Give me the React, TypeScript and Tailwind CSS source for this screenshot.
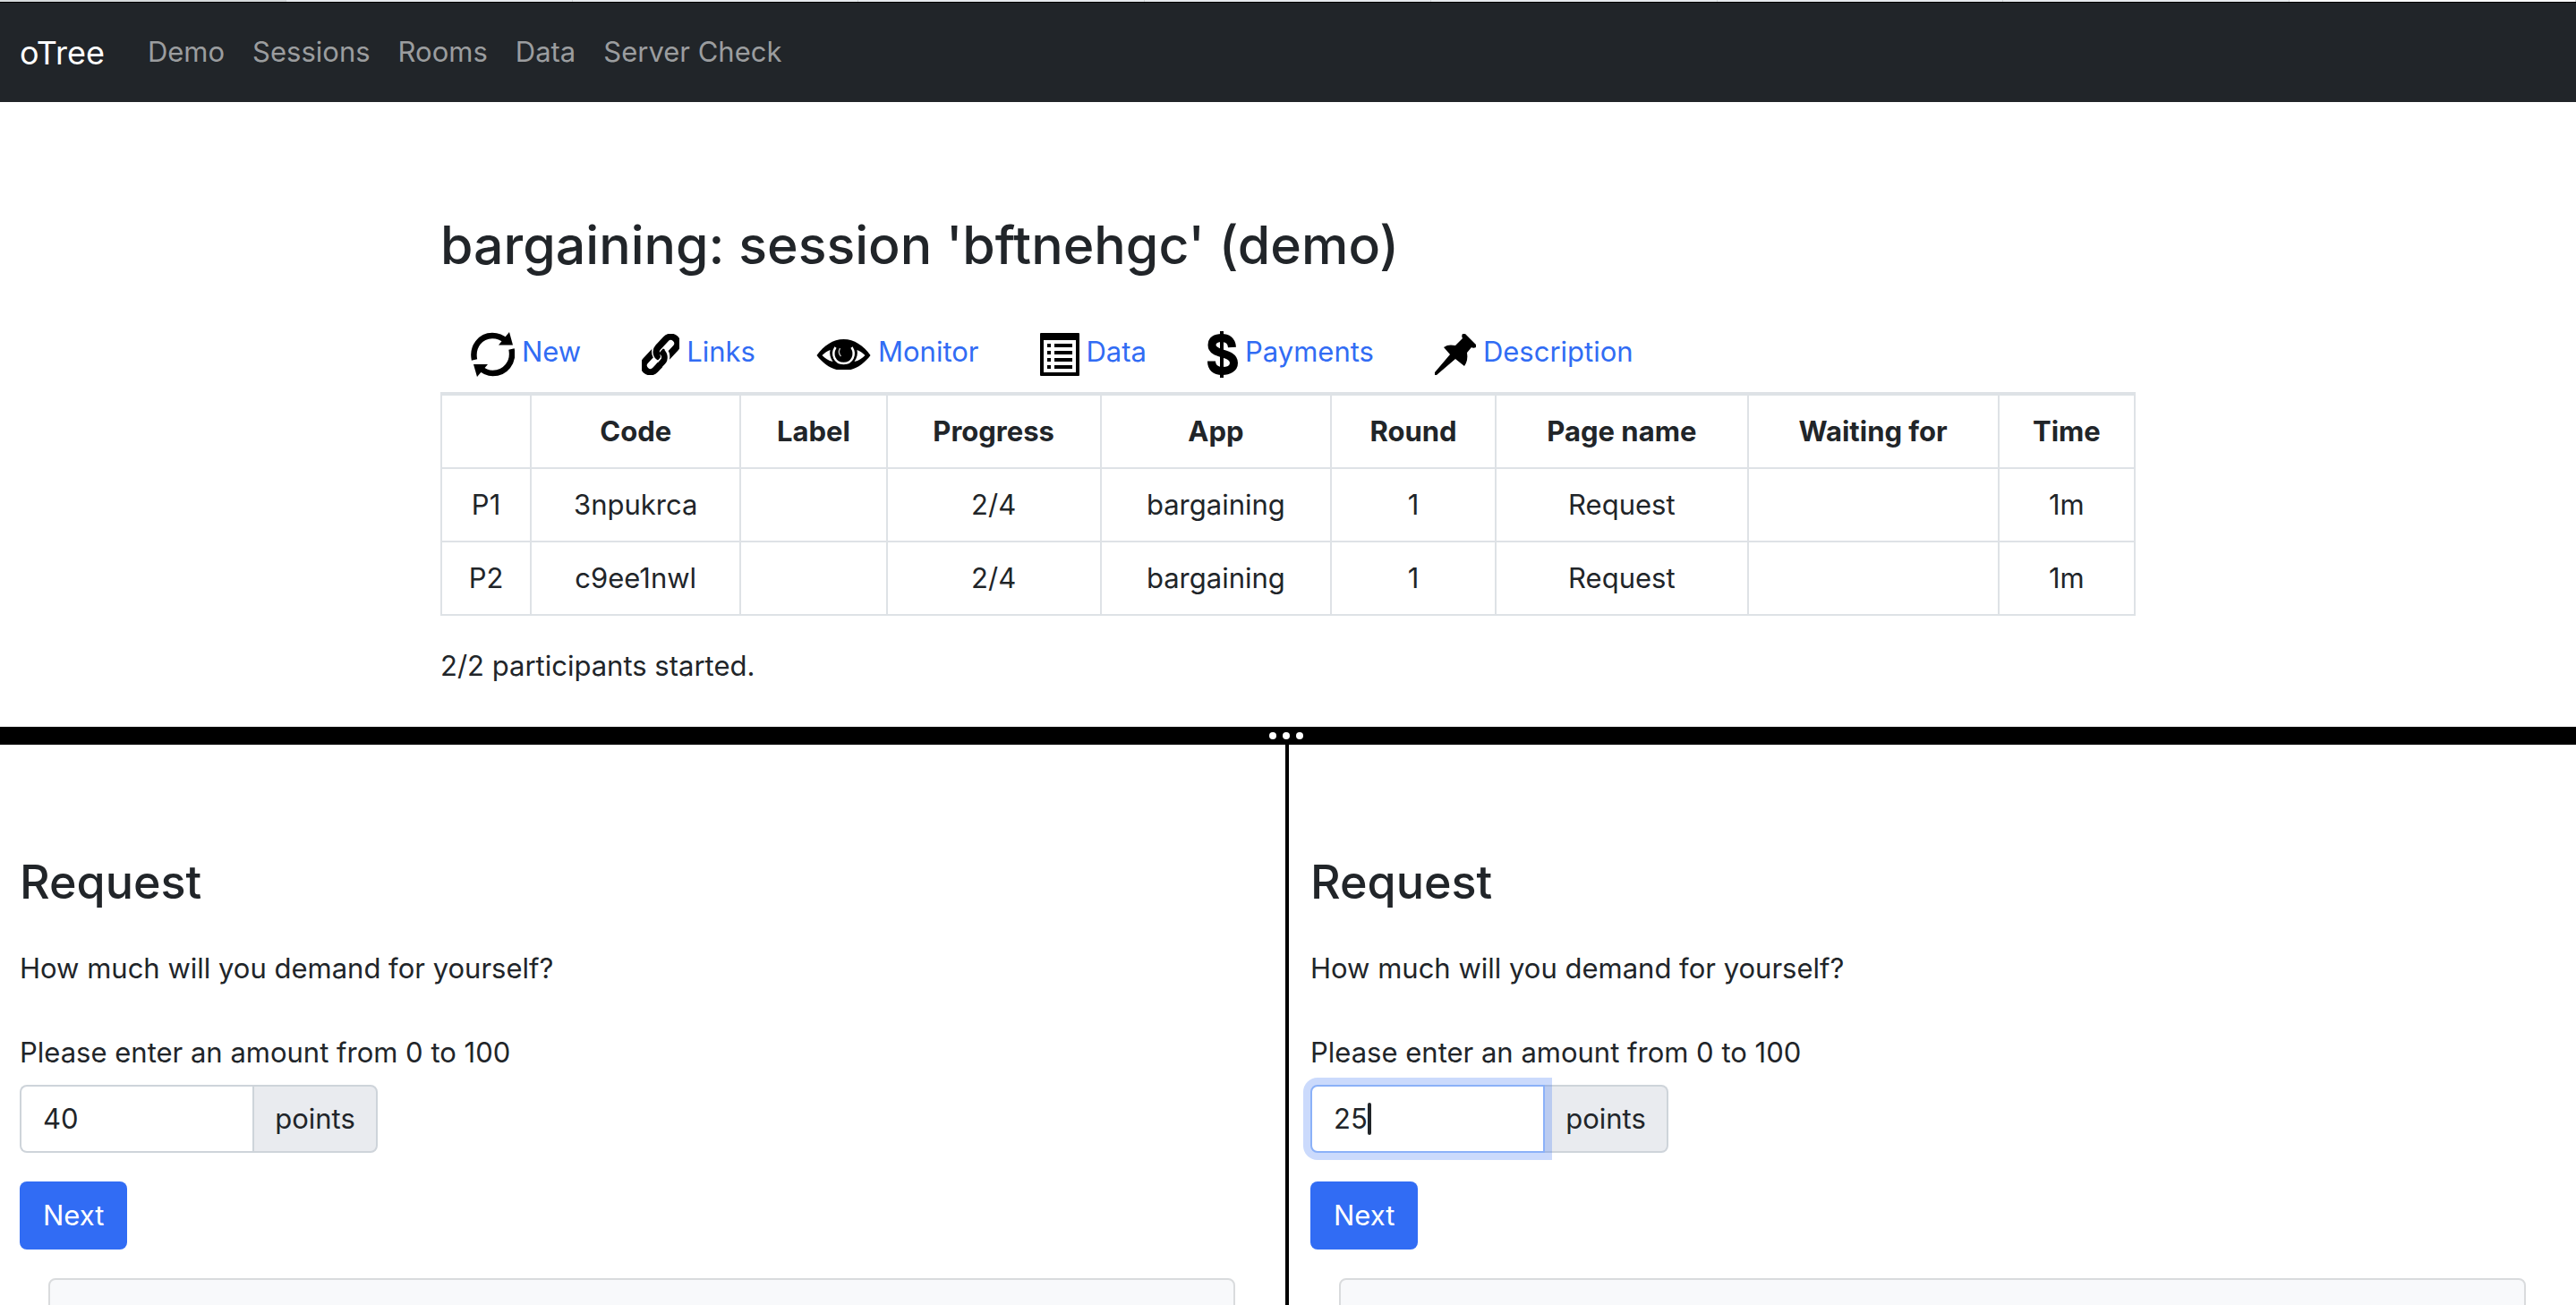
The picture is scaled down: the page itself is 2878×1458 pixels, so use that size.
import React from "react";

const navLinks = ["Demo", "Sessions", "Rooms", "Data", "Server Check"];

const RefreshIcon = () => (
  <svg viewBox="0 0 49 50" className="h-[50px] w-[49px]" fill="none" aria-hidden="true">
    <path d="M4 31C1 16 11 4 24 4c6 0 11 2 15 6" stroke="#000" strokeWidth="6.5" />
    <path d="M43 0l4 14.500H31z" fill="#000" />
    <path d="M45.500 19c3 15-7 27-21 27-6 0-10-2-14-6" stroke="#000" strokeWidth="6.500" />
    <path d="M7 50L3 36h16z" fill="#000" />
  </svg>
);

const LinkIcon = () => (
  <svg viewBox="0 0 42 46" className="h-[46px] w-[42px]" fill="none" aria-hidden="true">
    <g transform="translate(21 23) rotate(43) scale(1.15)">
      <rect x="-6.500" y="-3" width="13" height="24" rx="6.500" stroke="#000" strokeWidth="6.500" />
      <rect x="-6.500" y="-21" width="13" height="24" rx="6.500" stroke="#fff" strokeWidth="9" />
      <rect x="-6.500" y="-21" width="13" height="24" rx="6.500" stroke="#000" strokeWidth="6.500" />
      <path d="M0-3.500c4 0 6.500 3 6.500 7v4" stroke="#fff" strokeWidth="9" />
      <path d="M-2-3c5 0 8.500 3 8.500 7v6" stroke="#000" strokeWidth="6" />
    </g>
  </svg>
);

const EyeIcon = () => (
  <svg viewBox="0 0 60 34" className="h-[34px] w-[61px]" aria-hidden="true">
    <path d="M0 18C8 7 18 0 30 0s22 7 30 18C54 26 46 32 38 34H22C14 32 6 26 0 18z" />
    <path d="M6 18c3-3 6-5 9-6-1 4 0 9 3 13-5-1-9-4-12-7zM54 18c-3-3-6-5-9-6 1 4 0 9-3 13 5-1 9-4 12-7z" fill="#fff" />
    <path d="M21 9c-5 8-1 18 9 18s14-10 9-18" stroke="#fff" strokeWidth="2.500" fill="none" />
    <path d="M26 10c-2 4-1 7 1 9" stroke="#bbb" strokeWidth="1.500" fill="none" />
  </svg>
);

const DataIcon = () => (
  <svg viewBox="0 0 44 48" className="h-[48px] w-[44px]" aria-hidden="true">
    <rect width="44" height="48" rx="1" />
    <path d="M4 8h36v36H4z" fill="#fff" />
    <path d="M8 12h4v4H8zm8 0h20v4H16zM8 20h4v4H8zm8 0h20v4H16zM8 28h4v4H8zm8 0h20v4H16zM8 36h4v4H8zm8 0h20v4H16z" />
  </svg>
);

const DollarIcon = () => (
  <svg viewBox="0 0 34 52" className="h-[52px] w-[34px]" fill="none" stroke="#000" aria-hidden="true">
    <path d="M16 0v52" strokeWidth="4" />
    <path d="M27.500 18C27 10 22 7.500 16 7.500 9 7.500 5 10 5 15.500c0 12 24.500 7 24.500 20 0 6-6 9-13 9-8 0-12-4-12-11" strokeWidth="9" />
  </svg>
);

const PinIcon = () => (
  <svg viewBox="0 0 46 46" className="h-[46px] w-[46px]" aria-hidden="true">
    <path d="M31 0h3l12 12v3c-2 1-4 1-5 0l-5 6c1 6 0 11-3 15l-10-8L2 46H0v-3l17-20-7-8c4-3 8-3 13-2l8-8c-1-2-1-3 0-5z" />
  </svg>
);

const tabs = [
  { label: "New", Icon: RefreshIcon },
  { label: "Links", Icon: LinkIcon },
  { label: "Monitor", Icon: EyeIcon },
  { label: "Data", Icon: DataIcon },
  { label: "Payments", Icon: DollarIcon },
  { label: "Description", Icon: PinIcon },
];

const columns = [
  { name: "", width: "w-[100px]" },
  { name: "Code", width: "w-[234px]" },
  { name: "Label", width: "w-[163px]" },
  { name: "Progress", width: "w-[239px]" },
  { name: "App", width: "w-[257px]" },
  { name: "Round", width: "w-[184px]" },
  { name: "Page name", width: "w-[281px]" },
  { name: "Waiting for", width: "w-[280px]" },
  { name: "Time", width: "w-[152px]" },
];

const rows = [
  ["P1", "3npukrca", "", "2/4", "bargaining", "1", "Request", "", "1m"],
  ["P2", "c9ee1nwl", "", "2/4", "bargaining", "1", "Request", "", "1m"],
];

const browserTabs = [
  "bg-[#d6dadc]",
  "bg-[#e6eaed]",
  "bg-[#e6eaed]",
  "bg-[#e6eaed]",
  "bg-[#e6eaed]",
  "bg-[#e6eaed]",
  "bg-[#e6eaed]",
  "bg-[#e6eaed]",
  "bg-[#f8f9fa]",
];

function RequestPane({ id, amount, focused = false }: { id: string; amount: string; focused?: boolean }) {
  return (
    <section
      className={
        focused
          ? "w-[calc(50%-1px)] overflow-hidden px-6 pt-[120px]"
          : "min-w-0 flex-1 overflow-hidden pt-[120px] pr-6 pl-[22px]"
      }
    >
      <h2 className="text-[52px] leading-[68px] font-medium">Request</h2>
      <p className="mt-[38px] leading-[48px]">How much will you demand for yourself?</p>
      <form onSubmit={(e) => e.preventDefault()}>
        <label htmlFor={id} className="mt-[46px] block leading-[48px]">
          Please enter an amount from 0 to 100
        </label>
        <div className="mt-3 flex h-[76px] w-[400px]">
          <div
            className={
              focused
                ? "z-10 flex w-[262px] items-center rounded-l-lg border-2 border-[#8bb1f8] bg-white px-6 shadow-[0_0_0_8px_rgba(49,108,244,0.25)]"
                : "flex w-[260px] items-center rounded-l-lg border-2 border-r-0 border-[#ced4da] bg-white px-6"
            }
          >
            <input
              id={id}
              type="text"
              inputMode="numeric"
              defaultValue={amount}
              className="field-sizing-content bg-transparent outline-none"
            />
            {focused && <span className="h-[36px] w-[4px] rounded-sm bg-[#212529]" />}
          </div>
          <span
            className={
              focused
                ? "flex flex-1 items-center justify-center rounded-r-lg border-2 border-l-0 border-[#ced4da] bg-[#e9ebef]"
                : "flex flex-1 items-center justify-center rounded-r-lg border-2 border-[#ced4da] bg-[#e9ebef]"
            }
          >
            points
          </span>
        </div>
        <button type="submit" className="mt-8 h-[76px] rounded-lg bg-[#316cf4] px-[26px] text-white">
          Next
        </button>
      </form>
      <div className="mx-8 mt-8 h-[200px] rounded-lg border-2 border-[#d9dbdd] bg-[#f8f9fb]" />
    </section>
  );
}

export default function App() {
  return (
    <div className="flex h-screen flex-col overflow-hidden bg-white font-['Inter',sans-serif] text-[31px] text-[#212529]">
      <div className="flex h-[2px] shrink-0">
        {browserTabs.map((color, i) => (
          <div key={i} className={color + " flex-1 border-r border-[#d0d4d7]"} />
        ))}
      </div>
      <nav className="flex h-[112px] shrink-0 items-center border-t border-black bg-[#212529] px-[22px]">
        <a href="#" className="text-[36px] text-white">oTree</a>
        <ul className="ml-12 flex gap-[31px] text-[#9b9d9f]">
          {navLinks.map((l) => (
            <li key={l}><a href="#">{l}</a></li>
          ))}
        </ul>
      </nav>
      <main className="mx-auto w-full max-w-[1894px] flex-1 pt-[122px]">
        <h1 className="text-[59px] leading-[76px] font-medium">bargaining: session 'bftnehgc' (demo)</h1>
        <ul className="mt-[46px] mb-1 flex h-[76px] items-center gap-[68px] pl-[34px]">
          {tabs.map(({ label, Icon }) => (
            <li key={label}>
              <a href="#" className="flex items-center gap-2 text-[#316cf4]"><Icon /><span className="pb-[6px]">{label}</span></a>
            </li>
          ))}
        </ul>
        <table className="w-full table-fixed border-collapse border-2 border-t-4 border-[#dee2e6] text-center">
          <thead>
            <tr>
              {columns.map((c) => (
                <th key={c.name} scope="col" className={c.width + " h-[83px] border-x-2 border-b-2 border-[#dee2e6] font-bold"}>{c.name}</th>
              ))}
            </tr>
          </thead>
          <tbody>
            {rows.map((r) => (
              <tr key={r[0]}>
                {r.map((cell, i) => (
                  <td key={i} className="h-[82px] border-2 border-[#dee2e6]">{cell}</td>
                ))}
              </tr>
            ))}
          </tbody>
        </table>
        <p className="mt-8 leading-[48px]">2/2 participants started.</p>
      </main>
      <div className="flex h-[20px] shrink-0 items-center justify-center gap-[7px] bg-black pr-1" role="separator">
        <span className="size-2 rounded-full bg-white" />
        <span className="size-2 rounded-full bg-white" />
        <span className="size-2 rounded-full bg-white" />
      </div>
      <div className="flex h-[626px] shrink-0">
        <RequestPane id="amount-p1" amount="40" />
        <div className="w-1 bg-black" />
        <RequestPane id="amount-p2" amount="25" focused />
      </div>
    </div>
  );
}
